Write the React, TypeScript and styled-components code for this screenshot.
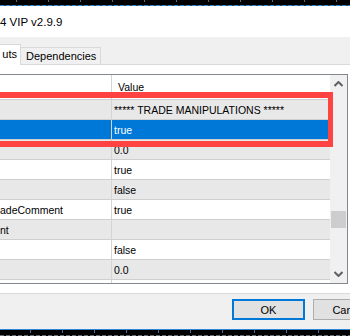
import React from "react";
import styled, { createGlobalStyle, css } from "styled-components";

const GlobalStyle = createGlobalStyle`
  html, body {
    margin: 0;
    padding: 0;
    background: #000;
    overflow: hidden;
  }
  body {
    font-family: "Liberation Sans", Arial, sans-serif;
    font-size: 11px;
    color: #000;
  }
`;

type RowKind = "gray" | "white" | "selected";

interface Param {
  name: string;
  value: string;
  kind: RowKind;
}

const params: Param[] = [
  { name: "", value: "***** TRADE MANIPULATIONS *****", kind: "gray" },
  { name: "", value: "true", kind: "selected" },
  { name: "", value: "0.0", kind: "gray" },
  { name: "", value: "true", kind: "white" },
  { name: "", value: "false", kind: "gray" },
  { name: "adeComment", value: "true", kind: "white" },
  { name: "nt", value: "", kind: "gray" },
  { name: "", value: "false", kind: "white" },
  { name: "", value: "0.0", kind: "gray" },
  { name: "", value: "", kind: "white" },
];

const App: React.FC = () => {
  return (
    <>
      <GlobalStyle />
      <Screen>
        <RulerBar $edge="top" />
        <TitleBar>4 VIP v2.9.9</TitleBar>

        <TabStrip>
          <Tab $active>uts</Tab>
          <Tab>Dependencies</Tab>
        </TabStrip>

        <Panel>
          <ListBox>
            <Grid>
              <HeaderRow>
                <NameCell />
                <HeaderValue>Value</HeaderValue>
              </HeaderRow>
              {params.map((p, i) => (
                <Row key={i} $kind={p.kind}>
                  <NameCell>{p.name}</NameCell>
                  <ValueCell>{p.value}</ValueCell>
                </Row>
              ))}
            </Grid>
            <ScrollBar>
              <ScrollArrow viewBox="0 0 9 6">
                <path d="M0.5 5 L4.5 1 L8.5 5" />
              </ScrollArrow>
              <ScrollTrack>
                <Thumb />
              </ScrollTrack>
              <ScrollArrow viewBox="0 0 9 6">
                <path d="M0.5 1 L4.5 5 L8.5 1" />
              </ScrollArrow>
            </ScrollBar>
            <Highlight />
          </ListBox>
        </Panel>

        <Separator />

        <Footer>
          <ButtonGroup>
            <DialogButton $default>OK</DialogButton>
            <DialogButton>Cancel</DialogButton>
          </ButtonGroup>
        </Footer>
        <RulerBar $edge="bottom" />
      </Screen>
    </>
  );
};

export default App;

const Screen = styled.div`
  display: flex;
  flex-direction: column;
  width: 350px;
  height: 336px;
  overflow: hidden;
  background: #fff;
`;

const RulerBar = styled.div<{ $edge: "top" | "bottom" }>`
  flex: none;
  background-color: #000;
  ${({ $edge }) =>
    $edge === "top"
      ? css`
          height: 6px;
          background-image: repeating-linear-gradient(
              90deg,
              #2b86d9 0 4px,
              #3a3f46 4px 6px
            ),
            linear-gradient(90deg, transparent 16px, #5b6b7c 16px 17px, transparent 17px);
          background-size: 100% 1px, 32px 2px;
          background-position: 0 5px, 0 0;
          background-repeat: repeat-x;
        `
      : css`
          height: 7px;
          background-image: linear-gradient(#2b86d9, #2b86d9),
            linear-gradient(90deg, transparent 30px, #4f6d8c 30px 31px, transparent 31px),
            repeating-linear-gradient(90deg, #6a6f76 0 4px, transparent 4px 6px);
          background-size: 100% 1px, 32px 3px, 100% 1px;
          background-position: 0 0, 0 1px, 0 6px;
          background-repeat: repeat-x;
        `}
`;

const TitleBar = styled.div`
  flex: none;
  height: 31px;
  display: flex;
  align-items: center;
  padding-top: 0;
  font-size: 11.5px;
  color: #000;
  background: #fff;
  white-space: nowrap;
`;

const TabStrip = styled.div`
  flex: none;
  height: 27px;
  display: flex;
  align-items: flex-end;
  background: #f0f0f0;
  border-bottom: 1px solid #d9d9d9;
`;

const Tab = styled.div<{ $active?: boolean }>`
  display: flex;
  align-items: center;
  box-sizing: border-box;
  font-size: 11px;
  white-space: nowrap;
  ${({ $active }) =>
    $active
      ? css`
          height: 21px;
          margin-bottom: -1px;
          width: 21px;
          justify-content: flex-end;
          padding-right: 3px;
          padding-bottom: 2px;
          background: #fff;
          border-top: 1px solid #d9d9d9;
          border-right: 1px solid #d9d9d9;
        `
      : css`
          height: 17px;
          padding: 0 4px 0 5px;
          background: #f0f0f0;
          border: 1px solid #d9d9d9;
          border-left: none;
          border-bottom: none;
        `}
`;

const Panel = styled.div`
  flex: none;
  height: 228px;
  box-sizing: border-box;
  padding: 9px 0;
  background: #fff;
`;

const ListBox = styled.div`
  position: relative;
  display: flex;
  height: 210px;
  box-sizing: border-box;
  margin-left: -1px;
  width: 349px;
  border: 1px solid #828790;
  background: #fff;
`;

const Grid = styled.div`
  flex: 1;
  overflow: hidden;
`;

const rowBase = css`
  display: flex;
  align-items: center;
  white-space: nowrap;
`;

const HeaderRow = styled.div`
  ${rowBase};
  height: 24px;
  background: #fff;
`;

const Row = styled.div<{ $kind: RowKind }>`
  ${rowBase};
  height: 20px;
  box-sizing: border-box;
  border-top: 1px solid #cfcfcf;
  font-size: 10.5px;
  background: ${({ $kind }) =>
    $kind === "selected" ? "#0078d7" : $kind === "gray" ? "#e8e8e8" : "#fff"};
  color: ${({ $kind }) => ($kind === "selected" ? "#fff" : "#000")};
`;

const NameCell = styled.div`
  flex: none;
  width: 112px;
  height: 100%;
  box-sizing: border-box;
  display: flex;
  align-items: center;
  overflow: hidden;
  border-right: 1px solid #d4d4d4;
  color: #000;
`;

const ValueCell = styled.div`
  flex: 1;
  padding-left: 2px;
  overflow: hidden;
`;

const HeaderValue = styled.div`
  flex: 1;
  padding-left: 6px;
  padding-bottom: 1px;
  font-size: 10.5px;
`;

const ScrollBar = styled.div`
  flex: none;
  width: 17px;
  display: flex;
  flex-direction: column;
  align-items: center;
  background: #f0f0f0;
`;

const ScrollArrow = styled.svg`
  flex: none;
  width: 9px;
  height: 6px;
  margin: 6px 0;
  fill: none;
  stroke: #606060;
  stroke-width: 2;
`;

const ScrollTrack = styled.div`
  flex: 1;
  width: 100%;
  position: relative;
`;

const Thumb = styled.div`
  margin: 118px 1px 0;
  height: 17px;
  background: #cdcdcd;
`;

const Highlight = styled.div`
  position: absolute;
  left: -10px;
  top: 17px;
  width: 343px;
  height: 55px;
  box-sizing: border-box;
  border: 6px solid #ff4343;
  border-right-width: 5px;
  pointer-events: none;
`;

const Separator = styled.div`
  flex: none;
  height: 1px;
  background: #dadada;
`;

const Footer = styled.div`
  flex: none;
  height: 35px;
  box-sizing: border-box;
  padding-top: 5px;
  display: flex;
  justify-content: flex-end;
  background: #f0f0f0;
  overflow: hidden;
`;

const ButtonGroup = styled.div`
  display: flex;
  gap: 8px;
  margin-right: -36px;
`;

const DialogButton = styled.div<{ $default?: boolean }>`
  width: 73px;
  height: 21px;
  box-sizing: border-box;
  display: flex;
  align-items: center;
  justify-content: center;
  font-size: 11px;
  background: #e1e1e1;
  border: ${({ $default }) => ($default ? "2px solid #0078d7" : "1px solid #adadad")};
`;
